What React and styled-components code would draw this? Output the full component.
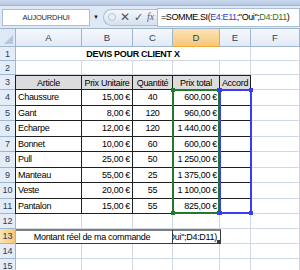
import styled, { createGlobalStyle } from "styled-components";

const Global = createGlobalStyle`
  body {
    margin: 0;
    background: #ffffff;
    font-family: "Liberation Sans", Arial, sans-serif;
  }
`;

const Page = styled.div`
  width: 300px;
  height: 270px;
  overflow: hidden;
  background: #ffffff;
`;

const TopStrip = styled.div`
  height: 5px;
  background: linear-gradient(#c9d8ec, #b7c9e2);
  border-bottom: 1px solid #9fb4cf;
`;

const FormulaBar = styled.div`
  height: 22px;
  display: flex;
  align-items: center;
  background: #dfe9f5;
  border-bottom: 1px solid #9eb6ce;
`;

const NameBox = styled.div`
  width: 86px;
  height: 15px;
  margin-left: 2px;
  background: #ffffff;
  border: 1px solid #a9bfd6;
  display: flex;
  align-items: center;
  justify-content: center;
  font-size: 7.5px;
  color: #1c2a3a;
  letter-spacing: -0.2px;
`;

const Arrow = styled.span`
  width: 12px;
  text-align: center;
  font-size: 6px;
  color: #1b1b1b;
`;

const Capsule = styled.div`
  height: 17px;
  width: 54px;
  margin-left: 1px;
  border-radius: 9px 0 0 9px;
  background: linear-gradient(#f4f7fb, #d5e1ef);
  border: 1px solid #a9bfd6;
  border-right: none;
  display: flex;
  align-items: center;
  gap: 4px;
  padding-left: 4px;
  box-sizing: border-box;
`;

const Dot = styled.span`
  width: 6px;
  height: 6px;
  border-radius: 50%;
  border: 1px solid #b6c6d8;
  background: #e8eef6;
`;

const Glyph = styled.span`
  font-size: ${(p) => p.$size || 11}px;
  color: ${(p) => p.$color || "#8a96a4"};
  font-style: ${(p) => (p.$italic ? "italic" : "normal")};
  font-family: ${(p) => (p.$serif ? '"Liberation Serif", serif' : "inherit")};
  line-height: 1;
`;

const FormulaInput = styled.div`
  flex: 1;
  height: 17px;
  background: #ffffff;
  border: 1px solid #a9bfd6;
  display: flex;
  align-items: center;
  padding-left: 3px;
  font-size: 9px;
  letter-spacing: -0.4px;
  color: #000000;
  white-space: nowrap;
  overflow: hidden;
`;

const Ref = styled.span`
  color: ${(p) => p.$color};
`;

const Sheet = styled.div`
  display: grid;
  grid-template-columns: 16px 66px 51px 40px 47px 31px 1fr;
  grid-template-rows: 18px 14px 14px 15px repeat(8, 15.5px) repeat(4, 15px);
  font-size: 9px;
  color: #000000;
`;

const Corner = styled.div`
  grid-row: 1;
  grid-column: 1;
  background: #dfe9f5;
  border-right: 1px solid #9eb6ce;
  border-bottom: 1px solid #9eb6ce;
  position: relative;
  &::after {
    content: "";
    position: absolute;
    right: 2px;
    bottom: 2px;
    border-left: 9px solid transparent;
    border-bottom: 9px solid #b4c6dc;
  }
`;

const ColHead = styled.div`
  grid-row: 1;
  grid-column: ${(p) => p.$c};
  background: ${(p) =>
    p.$active
      ? "linear-gradient(#fbe3b3, #f7c77a)"
      : "linear-gradient(#f5f8fc, #e2eaf5)"};
  border-right: 1px solid #9eb6ce;
  border-bottom: 1px solid ${(p) => (p.$active ? "#f2a93b" : "#9eb6ce")};
  display: flex;
  align-items: center;
  justify-content: center;
  color: #27415f;
  font-size: 9.5px;
  box-sizing: border-box;
`;

const RowHead = styled.div`
  grid-row: ${(p) => p.$r};
  grid-column: 1;
  background: ${(p) =>
    p.$active ? "linear-gradient(90deg, #fbe3b3, #f7c77a)" : "#e4ecf7"};
  border-right: 1px solid ${(p) => (p.$active ? "#f2a93b" : "#9eb6ce")};
  border-bottom: 1px solid #9eb6ce;
  display: flex;
  align-items: center;
  justify-content: center;
  color: #27415f;
  font-size: 9px;
  box-sizing: border-box;
  overflow: hidden;
`;

const Cell = styled.div`
  grid-row: ${(p) => p.$r};
  grid-column: ${(p) => p.$c};
  border-right: 1px solid ${(p) => (p.$box ? "#1f1f1f" : "#d0d7e5")};
  border-bottom: 1px solid ${(p) => (p.$box ? "#1f1f1f" : "#d0d7e5")};
  border-left: ${(p) => (p.$box && p.$first ? "1px solid #1f1f1f" : "none")};
  border-top: ${(p) => (p.$box && p.$top ? "1px solid #1f1f1f" : "none")};
  background: ${(p) => (p.$head ? "#dcdcdc" : "#ffffff")};
  display: flex;
  align-items: center;
  justify-content: ${(p) =>
    p.$align === "right" ? "flex-end" : p.$align === "center" ? "center" : "flex-start"};
  padding: 0 2px;
  margin: ${(p) => (p.$first ? "0 0 0 -1px" : "0")};
  box-sizing: border-box;
  white-space: nowrap;
  overflow: hidden;
  font-weight: ${(p) => (p.$bold ? 700 : 400)};
  letter-spacing: -0.3px;
`;

const Total = styled.div`
  grid-column: 2 / 5;
  grid-row: 14;
  border-top: 2px solid #7f7f7f;
  border-bottom: 1px solid #3a3a3a;
  border-right: 1px solid #3a3a3a;
  padding-right: 4px;
  display: flex;
  align-items: center;
  justify-content: center;
  letter-spacing: -0.3px;
  white-space: nowrap;
  box-sizing: border-box;
  overflow: hidden;
  z-index: 1;
`;

const Editor = styled.div`
  grid-column: 5;
  grid-row: 14;
  border: 1px solid #3a3a3a;
  border-left: none;
  border-top: 2px solid #7f7f7f;
  margin-right: -1px;
  padding-right: 2px;
  position: relative;
  box-sizing: border-box;
  background: #ffffff;
  overflow: hidden;
  z-index: 1;
  &::after {
    content: "";
    position: absolute;
    right: 0;
    bottom: 0;
    width: 3px;
    height: 3px;
    background: #3a3a3a;
  }
`;

const EditorText = styled.div`
  position: absolute;
  right: 3px;
  top: 0;
  bottom: 0;
  display: flex;
  align-items: center;
  white-space: nowrap;
  letter-spacing: -0.3px;
`;

const Range = styled.div`
  grid-column: ${(p) => p.$c};
  grid-row: 5 / 13;
  border: 2px solid ${(p) => p.$color};
  margin: -1px ${(p) => (p.$c === 6 ? "-1px" : "0")} 0 -1px;
  pointer-events: none;
  position: relative;
  z-index: 2;
`;

const Handle = styled.span`
  position: absolute;
  width: 4px;
  height: 4px;
  background: ${(p) => p.$color};
  ${(p) => (p.$top ? "top: -3px;" : "bottom: -3px;")}
  ${(p) => (p.$left ? "left: -3px;" : "right: -3px;")}
`;

const columns = ["A", "B", "C", "D", "E", "F"];

const rows = [
  ["Chaussure", "15,00 €", "40", "600,00 €"],
  ["Gant", "8,00 €", "120", "960,00 €"],
  ["Echarpe", "12,00 €", "120", "1 440,00 €"],
  ["Bonnet", "10,00 €", "60", "600,00 €"],
  ["Pull", "25,00 €", "50", "1 250,00 €"],
  ["Manteau", "55,00 €", "25", "1 375,00 €"],
  ["Veste", "20,00 €", "55", "1 100,00 €"],
  ["Pantalon", "15,00 €", "55", "825,00 €"],
];

const headers = ["Article", "Prix Unitaire", "Quantité", "Prix total", "Accord"];

const BlankRow = ({ r }) =>
  [2, 3, 4, 5, 6, 7].map((c) => <Cell key={`${r}-${c}`} $r={r} $c={c} />);

const RangeBox = ({ c, color }) => (
  <Range $c={c} $color={color}>
    <Handle $color={color} $top $left />
    <Handle $color={color} $top />
    <Handle $color={color} $left />
    <Handle $color={color} />
  </Range>
);

export default function App() {
  return (
    <Page>
      <Global />
      <TopStrip />
      <FormulaBar>
        <NameBox>AUJOURDHUI</NameBox>
        <Arrow>▼</Arrow>
        <Capsule>
          <Dot />
          <Glyph $size={12} $color="#4a5563">✕</Glyph>
          <Glyph $size={11} $color="#4a5563">✓</Glyph>
          <Glyph $size={10} $color="#5a6572" $italic $serif>
            fx
          </Glyph>
        </Capsule>
        <FormulaInput>
          =SOMME.SI(<Ref $color="#2b43c8">E4:E11</Ref>;"Oui";
          <Ref $color="#1f7a2a">D4:D11</Ref>)
        </FormulaInput>
      </FormulaBar>
      <Sheet>
        <Corner />
        {columns.map((c, i) => (
          <ColHead key={c} $c={i + 2} $active={c === "D"}>
            {c}
          </ColHead>
        ))}

        {Array.from({ length: 15 }).map((_, i) => (
          <RowHead key={`rh${i}`} $r={i + 2} $active={i + 1 === 13}>
            {i + 1}
          </RowHead>
        ))}

        <Cell $r={2} $c="2 / 7" $align="center" $bold>
          DEVIS POUR CLIENT X
        </Cell>
        <Cell $r={2} $c={7} />

        <BlankRow r={3} />

        {headers.map((h, i) => (
          <Cell key={h} $r={4} $c={i + 2} $box $head $top $first={i === 0} $align="center">
            {h}
          </Cell>
        ))}
        <Cell $r={4} $c={7} />

        {rows.map((row, i) => {
          const r = i + 5;
          return [
            <Cell key={`a${i}`} $r={r} $c={2} $box $first>
              {row[0]}
            </Cell>,
            <Cell key={`b${i}`} $r={r} $c={3} $box $align="right">
              {row[1]}
            </Cell>,
            <Cell key={`c${i}`} $r={r} $c={4} $box $align="center">
              {row[2]}
            </Cell>,
            <Cell key={`d${i}`} $r={r} $c={5} $box $align="right">
              {row[3]}
            </Cell>,
            <Cell key={`e${i}`} $r={r} $c={6} $box />,
            <Cell key={`f${i}`} $r={r} $c={7} />,
          ];
        })}

        <BlankRow r={13} />

        <Total>Montant réel de ma commande</Total>
        <Editor>
          <EditorText>=SOMME.SI(E4:E11;"Oui";D4:D11)</EditorText>
        </Editor>
        <Cell $r={14} $c={6} />
        <Cell $r={14} $c={7} />

        <BlankRow r={15} />
        <BlankRow r={16} />

        <RangeBox c={5} color="#1f7a2a" />
        <RangeBox c={6} color="#3d3df0" />
      </Sheet>
    </Page>
  );
}
